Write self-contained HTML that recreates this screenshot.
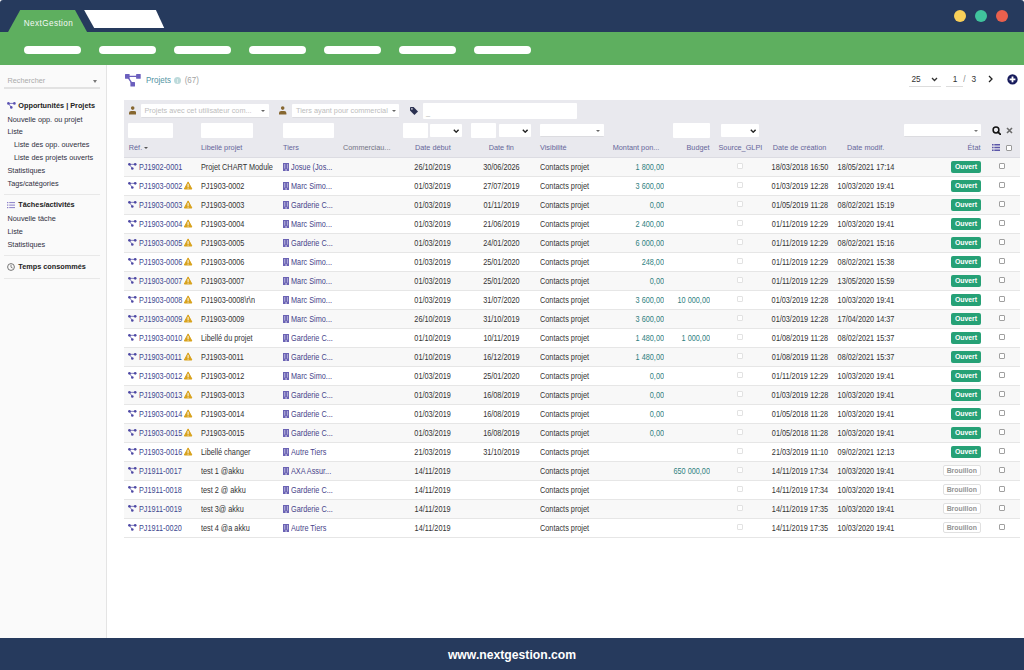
<!DOCTYPE html>
<html><head><meta charset="utf-8">
<style>
*{box-sizing:border-box;margin:0;padding:0}
html,body{width:1024px;height:670px;overflow:hidden;background:#fff}
body{position:relative;font-family:"Liberation Sans",sans-serif;font-size:7.3px;color:#333}
.abs{position:absolute}
#top{position:absolute;left:0;top:0;width:1024px;height:33px;background:#263a5d;border-radius:3px 3px 0 0}
#green{position:absolute;left:0;top:32px;width:1024px;height:33px;background:#5eaf5f}
.pill{position:absolute;top:46px;width:57px;height:8px;border-radius:4px;background:#fff}
.dot{position:absolute;top:10px;width:12px;height:12px;border-radius:50%}
#footer{position:absolute;left:0;top:638px;width:1024px;height:32px;background:#263a5d;color:#fff;font-weight:bold;font-size:12.2px;text-align:center;line-height:32px;padding-top:1px}
#side{position:absolute;left:0;top:65px;width:107px;height:573px;background:#fafafa;border-right:1px solid #e4e4e4}
.si{position:absolute;left:7.5px;white-space:nowrap;line-height:10px;color:#2f2f3f}
.si.b{font-weight:bold;color:#222}
.sep{position:absolute;left:4px;width:96px;height:1px;background:#e8e8e8}
#filt{position:absolute;left:124px;top:100px;width:896px;height:58px;background:#e9e9ee;border-bottom:1px solid #dcdce2}
.inp{position:absolute;background:#fff;border-radius:1px}
.ph{position:absolute;color:#bdbdbd;white-space:nowrap;line-height:10px}
.hd{position:absolute;top:143.3px;line-height:10px;color:#66669a;white-space:nowrap}
.row{position:absolute;left:124px;width:896px;height:19px;border-bottom:1px solid #e6e6e6}
.c{position:absolute;top:0.9px;line-height:18px;white-space:nowrap;transform:scaleY(1.15)}
.ctr{text-align:center}
.rgt{text-align:right}
.ref{color:#3e4890}
.reft{position:absolute;left:10.9px;top:0}
.pi{position:absolute;left:4.1px;top:5.4px}
.wi{position:absolute;left:60.2px;top:4.2px}
.lib{color:#333}
.tiers{color:#47448a}
.bi{position:absolute;left:158.8px;top:4.9px}
.tt{position:absolute;left:8px;top:0}
.dt{color:#333}
.vis{color:#333}
.amt{color:#2f7f7f}
.cb1{position:absolute;top:5px;width:6px;height:6px;border:1px solid #e2e2e2;border-radius:1px;background:#fff}
.cb2{position:absolute;left:875.3px;top:4.6px;width:6.2px;height:6.2px;border:0.9px solid #a0a0a0;border-radius:1px;background:#fff}
.badge{position:absolute;top:3.2px;height:11.4px;line-height:12px;font-weight:bold;font-size:6.9px;text-align:center;border-radius:2px}
.ouv{left:827px;width:30px;background:#26a176;color:#fff}
.badge span{display:inline-block;transform:scaleY(1.15)}
.brl{left:819px;width:37.5px;top:2.8px;height:11.2px;background:#fff;color:#939393;border:1px solid #e0e0e0;line-height:9px}
</style></head><body>
<div id="top"></div>
<svg class="abs" style="left:0;top:0" width="180" height="33" viewBox="0 0 180 33">
<path d="M7.5 33 L20.2 10 L75 10 L87.6 33 Z" fill="#5eaf5f"/>
<path d="M84.1 10 L155.9 10 L164.2 28.1 L94.2 28.1 Z" fill="#fff"/>
</svg>
<div class="abs" style="left:23.8px;top:19px;font-size:8.2px;letter-spacing:0.4px;line-height:10px;color:#f4f8f4">NextGestion</div>
<div class="dot" style="left:954.2px;top:10.4px;background:#f8cf59"></div>
<div class="dot" style="left:974.8px;top:10.4px;background:#40c39d"></div>
<div class="dot" style="left:996.2px;top:10.4px;background:#e9604d"></div>
<div id="green"></div>
<div class="pill" style="left:23.5px"></div><div class="pill" style="left:98.5px"></div><div class="pill" style="left:173.5px"></div><div class="pill" style="left:248.5px"></div><div class="pill" style="left:323.5px"></div><div class="pill" style="left:398.5px"></div><div class="pill" style="left:473.5px"></div>

<div id="side">
 <div class="si" style="left:7.5px;top:10.6px;color:#aaa">Rechercher</div>
 <div class="abs" style="left:92.5px;top:15px;width:0;height:0;border-left:2.5px solid transparent;border-right:2.5px solid transparent;border-top:3px solid #777"></div>
 <div class="abs" style="left:4px;top:22px;width:96px;height:1.5px;background:#e2e2e2"></div>
 <svg class="abs" style="left:7px;top:37px" width="9" height="7" viewBox="0 0 9 7"><path d="M1.4 1.4 L7.4 1.4 M1.4 1.4 L4.3 5.4" stroke="#5a52b2" stroke-width="0.8" fill="none"/><circle cx="1.4" cy="1.4" r="1.3" fill="#5a52b2"/><circle cx="7.4" cy="1.4" r="1.3" fill="#5a52b2"/><circle cx="4.3" cy="5.4" r="1.3" fill="#5a52b2"/></svg>
 <div class="si b" style="left:18.3px;top:35.8px">Opportunités | Projets</div>
 <div class="si" style="top:49.8px">Nouvelle opp. ou projet</div>
 <div class="si" style="top:62.3px">Liste</div>
 <div class="si" style="left:14px;top:75.3px">Liste des opp. ouvertes</div>
 <div class="si" style="left:14px;top:87.8px">Liste des projets ouverts</div>
 <div class="si" style="top:101.3px">Statistiques</div>
 <div class="si" style="top:114.3px">Tags/catégories</div>
 <div class="sep" style="top:129px"></div>
 <svg class="abs" style="left:7px;top:137px" width="8" height="7" viewBox="0 0 8 7"><g fill="#8a7fc8"><rect x="0" y="0" width="1.3" height="1.2"/><rect x="2.2" y="0.1" width="5.8" height="1"/><rect x="0" y="2.5" width="1.3" height="1.2"/><rect x="2.2" y="2.6" width="5.8" height="1"/><rect x="0" y="5" width="1.3" height="1.2"/><rect x="2.2" y="5.1" width="5.8" height="1"/></g></svg>
 <div class="si b" style="left:18.3px;top:135.3px">Tâches/activités</div>
 <div class="si" style="top:149.3px">Nouvelle tâche</div>
 <div class="si" style="top:161.8px">Liste</div>
 <div class="si" style="top:174.8px">Statistiques</div>
 <div class="sep" style="top:190px"></div>
 <svg class="abs" style="left:7px;top:198px" width="8" height="8" viewBox="0 0 8 8"><circle cx="4" cy="4" r="3.4" fill="none" stroke="#666" stroke-width="0.9"/><path d="M4 1.8 V4.2 L5.6 5" stroke="#666" stroke-width="0.8" fill="none"/></svg>
 <div class="si b" style="left:18.3px;top:197.3px">Temps consommés</div>
 <div class="sep" style="top:213px"></div>
</div>

<!-- title -->
<svg class="abs" style="left:124.9px;top:74px" width="16" height="13" viewBox="0 0 16 13"><path d="M2.3 2.3 L13.4 2.3 M2.3 2.3 L7.7 10.3" stroke="#6b5fbe" stroke-width="1.3" fill="none"/><rect x="0" y="0" width="4.6" height="4.7" rx="0.5" fill="#6b5fbe"/><rect x="11.1" y="0" width="4.6" height="4.7" rx="0.5" fill="#6b5fbe"/><rect x="5.4" y="8" width="4.6" height="4.6" rx="0.5" fill="#6b5fbe"/></svg>
<div class="abs" style="left:146px;top:75.8px;font-size:8px;line-height:10px;color:#5193a3;transform:scaleY(1.12)">Projets</div>
<div class="abs" style="left:174.2px;top:77.4px;width:7px;height:7px;border-radius:50%;background:#bddadb"></div>
<div class="abs" style="left:177.3px;top:79px;width:0.9px;height:4px;background:#fff;opacity:.5"></div>
<div class="abs" style="left:184.7px;top:75.8px;font-size:8px;line-height:10px;color:#a2a2a2;transform:scaleY(1.12)">(67)</div>

<div class="abs" style="left:911.5px;top:73.6px;font-size:8.3px;line-height:10px;color:#333;transform:scaleY(1.12)">25</div>
<svg class="abs" style="left:931px;top:77px" width="7" height="5" viewBox="0 0 7 5"><path d="M1 1 L3.5 3.5 L6 1" stroke="#333" stroke-width="1.3" fill="none"/></svg>
<div class="abs" style="left:909px;top:86px;width:32px;height:1px;background:#ddd"></div>
<div class="abs" style="left:952.7px;top:73.6px;font-size:8.3px;line-height:10px;color:#333;transform:scaleY(1.12)">1</div>
<div class="abs" style="left:963.2px;top:73.6px;font-size:8.3px;line-height:10px;color:#8a8a8a;transform:scaleY(1.12)">/</div>
<div class="abs" style="left:971.4px;top:73.6px;font-size:8.3px;line-height:10px;color:#333;transform:scaleY(1.12)">3</div>
<div class="abs" style="left:945.5px;top:86px;width:17.5px;height:1px;background:#ddd"></div>
<svg class="abs" style="left:988px;top:74.5px" width="5" height="8" viewBox="0 0 5 8"><path d="M1 1 L4 4 L1 7" stroke="#222" stroke-width="1.3" fill="none"/></svg>
<svg class="abs" style="left:1006.8px;top:74px" width="11" height="11" viewBox="0 0 11 11"><circle cx="5.5" cy="5.4" r="5.15" fill="#171b5c"/><rect x="2.6" y="4.5" width="5.8" height="1.8" fill="#fff"/><rect x="4.6" y="2.5" width="1.8" height="5.8" fill="#fff"/></svg>

<!-- filters -->
<div id="filt"></div>
<svg class="abs" style="left:128.7px;top:105.6px" width="7.4" height="9" viewBox="0 0 7.4 9"><circle cx="3.7" cy="2.1" r="1.8" fill="#86662f"/><path d="M0 8.6 L0 7 Q0 5 2.2 5 L5.2 5 Q7.4 5 7.4 7 L7.4 8.6 Z" fill="#86662f"/></svg>
<div class="inp" style="left:141.2px;top:104px;width:128px;height:14px;border-bottom:1px solid #dcdce0"></div>
<div class="ph" style="left:144.5px;top:105.5px">Projets avec cet utilisateur com...</div>
<div class="abs" style="left:261px;top:110px;border-left:2.2px solid transparent;border-right:2.2px solid transparent;border-top:2.6px solid #666"></div>
<svg class="abs" style="left:279.3px;top:105.6px" width="7.4" height="9" viewBox="0 0 7.4 9"><circle cx="3.7" cy="2.1" r="1.8" fill="#86662f"/><path d="M0 8.6 L0 7 Q0 5 2.2 5 L5.2 5 Q7.4 5 7.4 7 L7.4 8.6 Z" fill="#86662f"/></svg>
<div class="inp" style="left:292px;top:104px;width:107px;height:14px;border-bottom:1px solid #dcdce0"></div>
<div class="ph" style="left:296px;top:105.5px">Tiers ayant pour commercial</div>
<div class="abs" style="left:391.5px;top:110px;border-left:2.2px solid transparent;border-right:2.2px solid transparent;border-top:2.6px solid #666"></div>
<svg class="abs" style="left:410.4px;top:107px" width="8" height="8" viewBox="0 0 8 8"><path d="M0 0.8 Q0 0 0.8 0 L3.6 0 L8 4.4 L4.4 8 L0 3.6 Z" fill="#2a3050"/><circle cx="1.9" cy="1.9" r="0.8" fill="#e9e9ee"/></svg>
<div class="inp" style="left:423px;top:103px;width:154px;height:16px"></div>
<div class="ph" style="left:426px;top:107.5px;color:#b5b5b5">_</div>

<div class="inp" style="left:128px;top:123px;width:44.5px;height:15px"></div>
<div class="inp" style="left:201px;top:123px;width:51.5px;height:15px"></div>
<div class="inp" style="left:282.5px;top:123px;width:51.5px;height:15px"></div>
<div class="inp" style="left:403px;top:123px;width:24.5px;height:15px"></div>
<div class="inp" style="left:430px;top:123.6px;width:32.3px;height:13.2px"></div>
<svg class="abs" style="left:453.2px;top:128.6px" width="6.4" height="4.4" viewBox="0 0 6.4 4.4"><path d="M0.8 0.8 L3.2 3.2 L5.6 0.8" stroke="#222" stroke-width="1.4" fill="none"/></svg>
<div class="inp" style="left:471px;top:123px;width:25px;height:15px"></div>
<div class="inp" style="left:498.5px;top:123.6px;width:32.5px;height:13.2px"></div>
<svg class="abs" style="left:521.8px;top:128.6px" width="6.4" height="4.4" viewBox="0 0 6.4 4.4"><path d="M0.8 0.8 L3.2 3.2 L5.6 0.8" stroke="#222" stroke-width="1.4" fill="none"/></svg>
<div class="inp" style="left:540px;top:124px;width:64px;height:13.2px;border-bottom:1px solid #dcdce0"></div>
<div class="abs" style="left:596.2px;top:129.8px;border-left:2.2px solid transparent;border-right:2.2px solid transparent;border-top:2.6px solid #666"></div>
<div class="inp" style="left:673px;top:123px;width:37px;height:15px"></div>
<div class="inp" style="left:720.8px;top:123.9px;width:38.2px;height:13px"></div>
<svg class="abs" style="left:749.8px;top:128.6px" width="6.4" height="4.4" viewBox="0 0 6.4 4.4"><path d="M0.8 0.8 L3.2 3.2 L5.6 0.8" stroke="#222" stroke-width="1.4" fill="none"/></svg>
<div class="inp" style="left:904px;top:124.2px;width:77px;height:13px;border-bottom:1px solid #dcdce0"></div>
<div class="abs" style="left:973.5px;top:130px;border-left:2px solid transparent;border-right:2px solid transparent;border-top:2.4px solid #777"></div>
<svg class="abs" style="left:991.5px;top:126px" width="9" height="9" viewBox="0 0 9 9"><circle cx="4" cy="4" r="2.9" fill="none" stroke="#111" stroke-width="1.5"/><path d="M6.1 6.1 L8.4 8.4" stroke="#111" stroke-width="1.8" stroke-linecap="round"/></svg>
<svg class="abs" style="left:1006.4px;top:127.2px" width="7" height="7" viewBox="0 0 7 7"><path d="M1 1 L6 6 M6 1 L1 6" stroke="#6a6a6a" stroke-width="1.6"/></svg>

<!-- header labels -->
<div class="hd" style="left:128.8px">Réf.</div>
<div class="abs" style="left:143.9px;top:147.4px;border-left:2px solid transparent;border-right:2px solid transparent;border-top:2.4px solid #555"></div>
<div class="hd" style="left:201px">Libellé projet</div>
<div class="hd" style="left:283px">Tiers</div>
<div class="hd" style="left:343px;color:#747484">Commerciau...</div>
<div class="hd" style="left:415px">Date début</div>
<div class="hd" style="left:488.7px">Date fin</div>
<div class="hd" style="left:540px">Visibilité</div>
<div class="hd" style="left:612.7px">Montant pon...</div>
<div class="hd" style="left:686.5px">Budget</div>
<div class="hd" style="left:718.5px">Source_GLPI</div>
<div class="hd" style="left:772.8px">Date de création</div>
<div class="hd" style="left:847px">Date modif.</div>
<div class="hd" style="left:967.5px">État</div>
<svg class="abs" style="left:992px;top:144px" width="8" height="7" viewBox="0 0 8 7"><g fill="#5b56a8"><rect x="0" y="0" width="1.6" height="1.5"/><rect x="2.3" y="0" width="5.7" height="1.5"/><rect x="0" y="2.75" width="1.6" height="1.5"/><rect x="2.3" y="2.75" width="5.7" height="1.5"/><rect x="0" y="5.5" width="1.6" height="1.5"/><rect x="2.3" y="5.5" width="5.7" height="1.5"/></g></svg>
<div class="abs" style="left:1006px;top:144.5px;width:6.3px;height:6.3px;border:1px solid #9a9a9a;background:#fff;border-radius:1px"></div>

<div class="row" style="top:158px;background:#f8f8f8">
<svg class="pi" width="9" height="7" viewBox="0 0 9 7"><path d="M1.4 1.35 L7.2 1.35 M1.4 1.35 L4.3 5.5" stroke="#4d48a4" stroke-width="0.7" fill="none"/><circle cx="1.4" cy="1.35" r="1.3" fill="#4d48a4"/><circle cx="7.2" cy="1.35" r="1.3" fill="#4d48a4"/><circle cx="4.3" cy="5.5" r="1.3" fill="#4d48a4"/></svg>
<span class="c ref" style="left:14.9px">PJ1902-0001</span>
<span class="c lib" style="left:77px">Projet CHART Module</span>
<svg class="bi" width="6.2" height="8" viewBox="0 0 6.2 8"><rect x="0" y="0" width="6.2" height="8" fill="#6a62b4"/><rect x="1.1" y="1" width="1.2" height="4.6" fill="#fff" opacity=".45"/><rect x="3.9" y="1" width="1.2" height="4.6" fill="#fff" opacity=".45"/><rect x="2.4" y="6" width="1.4" height="2" fill="#fff" opacity=".5"/></svg>
<span class="c tiers" style="left:167px">Josue (Jos...</span>
<span class="c dt ctr" style="left:284.6px;width:48px">26/10/2019</span>
<span class="c dt ctr" style="left:353.4px;width:48px">30/06/2026</span>
<span class="c vis" style="left:416px">Contacts projet</span>
<span class="c amt rgt" style="right:356px">1 800,00</span>
<span class="cb1" style="left:613px"></span>
<span class="c dt ctr" style="left:646px;width:60px">18/03/2018 16:50</span>
<span class="c dt ctr" style="left:712px;width:60px">18/05/2021 17:14</span>
<span class="badge ouv"><span>Ouvert</span></span>
<span class="cb2"></span>
</div>
<div class="row" style="top:177px;background:#ffffff">
<svg class="pi" width="9" height="7" viewBox="0 0 9 7"><path d="M1.4 1.35 L7.2 1.35 M1.4 1.35 L4.3 5.5" stroke="#4d48a4" stroke-width="0.7" fill="none"/><circle cx="1.4" cy="1.35" r="1.3" fill="#4d48a4"/><circle cx="7.2" cy="1.35" r="1.3" fill="#4d48a4"/><circle cx="4.3" cy="5.5" r="1.3" fill="#4d48a4"/></svg>
<span class="c ref" style="left:14.9px">PJ1903-0002</span>
<svg class="wi" width="9" height="9" viewBox="0 0 9 9"><path d="M4.1 0.9 L7.9 8 L0.3 8 Z" fill="#d8a21d" stroke="#d8a21d" stroke-width="1" stroke-linejoin="round"/><rect x="3.5" y="3" width="1.2" height="3" fill="#fff" opacity=".8"/><rect x="3.5" y="6.6" width="1.2" height="1" fill="#fff" opacity=".8"/></svg>
<span class="c lib" style="left:77px">PJ1903-0002</span>
<svg class="bi" width="6.2" height="8" viewBox="0 0 6.2 8"><rect x="0" y="0" width="6.2" height="8" fill="#6a62b4"/><rect x="1.1" y="1" width="1.2" height="4.6" fill="#fff" opacity=".45"/><rect x="3.9" y="1" width="1.2" height="4.6" fill="#fff" opacity=".45"/><rect x="2.4" y="6" width="1.4" height="2" fill="#fff" opacity=".5"/></svg>
<span class="c tiers" style="left:167px">Marc Simo...</span>
<span class="c dt ctr" style="left:284.6px;width:48px">01/03/2019</span>
<span class="c dt ctr" style="left:353.4px;width:48px">27/07/2019</span>
<span class="c vis" style="left:416px">Contacts projet</span>
<span class="c amt rgt" style="right:356px">3 600,00</span>
<span class="cb1" style="left:613px"></span>
<span class="c dt ctr" style="left:646px;width:60px">01/03/2019 12:28</span>
<span class="c dt ctr" style="left:712px;width:60px">10/03/2020 19:41</span>
<span class="badge ouv"><span>Ouvert</span></span>
<span class="cb2"></span>
</div>
<div class="row" style="top:196px;background:#f8f8f8">
<svg class="pi" width="9" height="7" viewBox="0 0 9 7"><path d="M1.4 1.35 L7.2 1.35 M1.4 1.35 L4.3 5.5" stroke="#4d48a4" stroke-width="0.7" fill="none"/><circle cx="1.4" cy="1.35" r="1.3" fill="#4d48a4"/><circle cx="7.2" cy="1.35" r="1.3" fill="#4d48a4"/><circle cx="4.3" cy="5.5" r="1.3" fill="#4d48a4"/></svg>
<span class="c ref" style="left:14.9px">PJ1903-0003</span>
<svg class="wi" width="9" height="9" viewBox="0 0 9 9"><path d="M4.1 0.9 L7.9 8 L0.3 8 Z" fill="#d8a21d" stroke="#d8a21d" stroke-width="1" stroke-linejoin="round"/><rect x="3.5" y="3" width="1.2" height="3" fill="#fff" opacity=".8"/><rect x="3.5" y="6.6" width="1.2" height="1" fill="#fff" opacity=".8"/></svg>
<span class="c lib" style="left:77px">PJ1903-0003</span>
<svg class="bi" width="6.2" height="8" viewBox="0 0 6.2 8"><rect x="0" y="0" width="6.2" height="8" fill="#6a62b4"/><rect x="1.1" y="1" width="1.2" height="4.6" fill="#fff" opacity=".45"/><rect x="3.9" y="1" width="1.2" height="4.6" fill="#fff" opacity=".45"/><rect x="2.4" y="6" width="1.4" height="2" fill="#fff" opacity=".5"/></svg>
<span class="c tiers" style="left:167px">Garderie C...</span>
<span class="c dt ctr" style="left:284.6px;width:48px">01/03/2019</span>
<span class="c dt ctr" style="left:353.4px;width:48px">01/11/2019</span>
<span class="c vis" style="left:416px">Contacts projet</span>
<span class="c amt rgt" style="right:356px">0,00</span>
<span class="cb1" style="left:613px"></span>
<span class="c dt ctr" style="left:646px;width:60px">01/05/2019 11:28</span>
<span class="c dt ctr" style="left:712px;width:60px">08/02/2021 15:19</span>
<span class="badge ouv"><span>Ouvert</span></span>
<span class="cb2"></span>
</div>
<div class="row" style="top:215px;background:#ffffff">
<svg class="pi" width="9" height="7" viewBox="0 0 9 7"><path d="M1.4 1.35 L7.2 1.35 M1.4 1.35 L4.3 5.5" stroke="#4d48a4" stroke-width="0.7" fill="none"/><circle cx="1.4" cy="1.35" r="1.3" fill="#4d48a4"/><circle cx="7.2" cy="1.35" r="1.3" fill="#4d48a4"/><circle cx="4.3" cy="5.5" r="1.3" fill="#4d48a4"/></svg>
<span class="c ref" style="left:14.9px">PJ1903-0004</span>
<svg class="wi" width="9" height="9" viewBox="0 0 9 9"><path d="M4.1 0.9 L7.9 8 L0.3 8 Z" fill="#d8a21d" stroke="#d8a21d" stroke-width="1" stroke-linejoin="round"/><rect x="3.5" y="3" width="1.2" height="3" fill="#fff" opacity=".8"/><rect x="3.5" y="6.6" width="1.2" height="1" fill="#fff" opacity=".8"/></svg>
<span class="c lib" style="left:77px">PJ1903-0004</span>
<svg class="bi" width="6.2" height="8" viewBox="0 0 6.2 8"><rect x="0" y="0" width="6.2" height="8" fill="#6a62b4"/><rect x="1.1" y="1" width="1.2" height="4.6" fill="#fff" opacity=".45"/><rect x="3.9" y="1" width="1.2" height="4.6" fill="#fff" opacity=".45"/><rect x="2.4" y="6" width="1.4" height="2" fill="#fff" opacity=".5"/></svg>
<span class="c tiers" style="left:167px">Marc Simo...</span>
<span class="c dt ctr" style="left:284.6px;width:48px">01/03/2019</span>
<span class="c dt ctr" style="left:353.4px;width:48px">21/06/2019</span>
<span class="c vis" style="left:416px">Contacts projet</span>
<span class="c amt rgt" style="right:356px">2 400,00</span>
<span class="cb1" style="left:613px"></span>
<span class="c dt ctr" style="left:646px;width:60px">01/11/2019 12:29</span>
<span class="c dt ctr" style="left:712px;width:60px">10/03/2020 19:41</span>
<span class="badge ouv"><span>Ouvert</span></span>
<span class="cb2"></span>
</div>
<div class="row" style="top:234px;background:#f8f8f8">
<svg class="pi" width="9" height="7" viewBox="0 0 9 7"><path d="M1.4 1.35 L7.2 1.35 M1.4 1.35 L4.3 5.5" stroke="#4d48a4" stroke-width="0.7" fill="none"/><circle cx="1.4" cy="1.35" r="1.3" fill="#4d48a4"/><circle cx="7.2" cy="1.35" r="1.3" fill="#4d48a4"/><circle cx="4.3" cy="5.5" r="1.3" fill="#4d48a4"/></svg>
<span class="c ref" style="left:14.9px">PJ1903-0005</span>
<svg class="wi" width="9" height="9" viewBox="0 0 9 9"><path d="M4.1 0.9 L7.9 8 L0.3 8 Z" fill="#d8a21d" stroke="#d8a21d" stroke-width="1" stroke-linejoin="round"/><rect x="3.5" y="3" width="1.2" height="3" fill="#fff" opacity=".8"/><rect x="3.5" y="6.6" width="1.2" height="1" fill="#fff" opacity=".8"/></svg>
<span class="c lib" style="left:77px">PJ1903-0005</span>
<svg class="bi" width="6.2" height="8" viewBox="0 0 6.2 8"><rect x="0" y="0" width="6.2" height="8" fill="#6a62b4"/><rect x="1.1" y="1" width="1.2" height="4.6" fill="#fff" opacity=".45"/><rect x="3.9" y="1" width="1.2" height="4.6" fill="#fff" opacity=".45"/><rect x="2.4" y="6" width="1.4" height="2" fill="#fff" opacity=".5"/></svg>
<span class="c tiers" style="left:167px">Garderie C...</span>
<span class="c dt ctr" style="left:284.6px;width:48px">01/03/2019</span>
<span class="c dt ctr" style="left:353.4px;width:48px">24/01/2020</span>
<span class="c vis" style="left:416px">Contacts projet</span>
<span class="c amt rgt" style="right:356px">6 000,00</span>
<span class="cb1" style="left:613px"></span>
<span class="c dt ctr" style="left:646px;width:60px">01/11/2019 12:29</span>
<span class="c dt ctr" style="left:712px;width:60px">08/02/2021 15:16</span>
<span class="badge ouv"><span>Ouvert</span></span>
<span class="cb2"></span>
</div>
<div class="row" style="top:253px;background:#ffffff">
<svg class="pi" width="9" height="7" viewBox="0 0 9 7"><path d="M1.4 1.35 L7.2 1.35 M1.4 1.35 L4.3 5.5" stroke="#4d48a4" stroke-width="0.7" fill="none"/><circle cx="1.4" cy="1.35" r="1.3" fill="#4d48a4"/><circle cx="7.2" cy="1.35" r="1.3" fill="#4d48a4"/><circle cx="4.3" cy="5.5" r="1.3" fill="#4d48a4"/></svg>
<span class="c ref" style="left:14.9px">PJ1903-0006</span>
<svg class="wi" width="9" height="9" viewBox="0 0 9 9"><path d="M4.1 0.9 L7.9 8 L0.3 8 Z" fill="#d8a21d" stroke="#d8a21d" stroke-width="1" stroke-linejoin="round"/><rect x="3.5" y="3" width="1.2" height="3" fill="#fff" opacity=".8"/><rect x="3.5" y="6.6" width="1.2" height="1" fill="#fff" opacity=".8"/></svg>
<span class="c lib" style="left:77px">PJ1903-0006</span>
<svg class="bi" width="6.2" height="8" viewBox="0 0 6.2 8"><rect x="0" y="0" width="6.2" height="8" fill="#6a62b4"/><rect x="1.1" y="1" width="1.2" height="4.6" fill="#fff" opacity=".45"/><rect x="3.9" y="1" width="1.2" height="4.6" fill="#fff" opacity=".45"/><rect x="2.4" y="6" width="1.4" height="2" fill="#fff" opacity=".5"/></svg>
<span class="c tiers" style="left:167px">Marc Simo...</span>
<span class="c dt ctr" style="left:284.6px;width:48px">01/03/2019</span>
<span class="c dt ctr" style="left:353.4px;width:48px">25/01/2020</span>
<span class="c vis" style="left:416px">Contacts projet</span>
<span class="c amt rgt" style="right:356px">248,00</span>
<span class="cb1" style="left:613px"></span>
<span class="c dt ctr" style="left:646px;width:60px">01/11/2019 12:29</span>
<span class="c dt ctr" style="left:712px;width:60px">08/02/2021 15:38</span>
<span class="badge ouv"><span>Ouvert</span></span>
<span class="cb2"></span>
</div>
<div class="row" style="top:272px;background:#f8f8f8">
<svg class="pi" width="9" height="7" viewBox="0 0 9 7"><path d="M1.4 1.35 L7.2 1.35 M1.4 1.35 L4.3 5.5" stroke="#4d48a4" stroke-width="0.7" fill="none"/><circle cx="1.4" cy="1.35" r="1.3" fill="#4d48a4"/><circle cx="7.2" cy="1.35" r="1.3" fill="#4d48a4"/><circle cx="4.3" cy="5.5" r="1.3" fill="#4d48a4"/></svg>
<span class="c ref" style="left:14.9px">PJ1903-0007</span>
<svg class="wi" width="9" height="9" viewBox="0 0 9 9"><path d="M4.1 0.9 L7.9 8 L0.3 8 Z" fill="#d8a21d" stroke="#d8a21d" stroke-width="1" stroke-linejoin="round"/><rect x="3.5" y="3" width="1.2" height="3" fill="#fff" opacity=".8"/><rect x="3.5" y="6.6" width="1.2" height="1" fill="#fff" opacity=".8"/></svg>
<span class="c lib" style="left:77px">PJ1903-0007</span>
<svg class="bi" width="6.2" height="8" viewBox="0 0 6.2 8"><rect x="0" y="0" width="6.2" height="8" fill="#6a62b4"/><rect x="1.1" y="1" width="1.2" height="4.6" fill="#fff" opacity=".45"/><rect x="3.9" y="1" width="1.2" height="4.6" fill="#fff" opacity=".45"/><rect x="2.4" y="6" width="1.4" height="2" fill="#fff" opacity=".5"/></svg>
<span class="c tiers" style="left:167px">Marc Simo...</span>
<span class="c dt ctr" style="left:284.6px;width:48px">01/03/2019</span>
<span class="c dt ctr" style="left:353.4px;width:48px">25/01/2020</span>
<span class="c vis" style="left:416px">Contacts projet</span>
<span class="c amt rgt" style="right:356px">0,00</span>
<span class="cb1" style="left:613px"></span>
<span class="c dt ctr" style="left:646px;width:60px">01/11/2019 12:29</span>
<span class="c dt ctr" style="left:712px;width:60px">13/05/2020 15:59</span>
<span class="badge ouv"><span>Ouvert</span></span>
<span class="cb2"></span>
</div>
<div class="row" style="top:291px;background:#ffffff">
<svg class="pi" width="9" height="7" viewBox="0 0 9 7"><path d="M1.4 1.35 L7.2 1.35 M1.4 1.35 L4.3 5.5" stroke="#4d48a4" stroke-width="0.7" fill="none"/><circle cx="1.4" cy="1.35" r="1.3" fill="#4d48a4"/><circle cx="7.2" cy="1.35" r="1.3" fill="#4d48a4"/><circle cx="4.3" cy="5.5" r="1.3" fill="#4d48a4"/></svg>
<span class="c ref" style="left:14.9px">PJ1903-0008</span>
<svg class="wi" width="9" height="9" viewBox="0 0 9 9"><path d="M4.1 0.9 L7.9 8 L0.3 8 Z" fill="#d8a21d" stroke="#d8a21d" stroke-width="1" stroke-linejoin="round"/><rect x="3.5" y="3" width="1.2" height="3" fill="#fff" opacity=".8"/><rect x="3.5" y="6.6" width="1.2" height="1" fill="#fff" opacity=".8"/></svg>
<span class="c lib" style="left:77px">PJ1903-0008\r\n</span>
<svg class="bi" width="6.2" height="8" viewBox="0 0 6.2 8"><rect x="0" y="0" width="6.2" height="8" fill="#6a62b4"/><rect x="1.1" y="1" width="1.2" height="4.6" fill="#fff" opacity=".45"/><rect x="3.9" y="1" width="1.2" height="4.6" fill="#fff" opacity=".45"/><rect x="2.4" y="6" width="1.4" height="2" fill="#fff" opacity=".5"/></svg>
<span class="c tiers" style="left:167px">Marc Simo...</span>
<span class="c dt ctr" style="left:284.6px;width:48px">01/03/2019</span>
<span class="c dt ctr" style="left:353.4px;width:48px">31/07/2020</span>
<span class="c vis" style="left:416px">Contacts projet</span>
<span class="c amt rgt" style="right:356px">3 600,00</span>
<span class="c amt rgt" style="right:310px">10 000,00</span>
<span class="cb1" style="left:613px"></span>
<span class="c dt ctr" style="left:646px;width:60px">01/03/2019 12:28</span>
<span class="c dt ctr" style="left:712px;width:60px">10/03/2020 19:41</span>
<span class="badge ouv"><span>Ouvert</span></span>
<span class="cb2"></span>
</div>
<div class="row" style="top:310px;background:#f8f8f8">
<svg class="pi" width="9" height="7" viewBox="0 0 9 7"><path d="M1.4 1.35 L7.2 1.35 M1.4 1.35 L4.3 5.5" stroke="#4d48a4" stroke-width="0.7" fill="none"/><circle cx="1.4" cy="1.35" r="1.3" fill="#4d48a4"/><circle cx="7.2" cy="1.35" r="1.3" fill="#4d48a4"/><circle cx="4.3" cy="5.5" r="1.3" fill="#4d48a4"/></svg>
<span class="c ref" style="left:14.9px">PJ1903-0009</span>
<svg class="wi" width="9" height="9" viewBox="0 0 9 9"><path d="M4.1 0.9 L7.9 8 L0.3 8 Z" fill="#d8a21d" stroke="#d8a21d" stroke-width="1" stroke-linejoin="round"/><rect x="3.5" y="3" width="1.2" height="3" fill="#fff" opacity=".8"/><rect x="3.5" y="6.6" width="1.2" height="1" fill="#fff" opacity=".8"/></svg>
<span class="c lib" style="left:77px">PJ1903-0009</span>
<svg class="bi" width="6.2" height="8" viewBox="0 0 6.2 8"><rect x="0" y="0" width="6.2" height="8" fill="#6a62b4"/><rect x="1.1" y="1" width="1.2" height="4.6" fill="#fff" opacity=".45"/><rect x="3.9" y="1" width="1.2" height="4.6" fill="#fff" opacity=".45"/><rect x="2.4" y="6" width="1.4" height="2" fill="#fff" opacity=".5"/></svg>
<span class="c tiers" style="left:167px">Marc Simo...</span>
<span class="c dt ctr" style="left:284.6px;width:48px">26/10/2019</span>
<span class="c dt ctr" style="left:353.4px;width:48px">31/10/2019</span>
<span class="c vis" style="left:416px">Contacts projet</span>
<span class="c amt rgt" style="right:356px">3 600,00</span>
<span class="cb1" style="left:613px"></span>
<span class="c dt ctr" style="left:646px;width:60px">01/03/2019 12:28</span>
<span class="c dt ctr" style="left:712px;width:60px">17/04/2020 14:37</span>
<span class="badge ouv"><span>Ouvert</span></span>
<span class="cb2"></span>
</div>
<div class="row" style="top:329px;background:#ffffff">
<svg class="pi" width="9" height="7" viewBox="0 0 9 7"><path d="M1.4 1.35 L7.2 1.35 M1.4 1.35 L4.3 5.5" stroke="#4d48a4" stroke-width="0.7" fill="none"/><circle cx="1.4" cy="1.35" r="1.3" fill="#4d48a4"/><circle cx="7.2" cy="1.35" r="1.3" fill="#4d48a4"/><circle cx="4.3" cy="5.5" r="1.3" fill="#4d48a4"/></svg>
<span class="c ref" style="left:14.9px">PJ1903-0010</span>
<svg class="wi" width="9" height="9" viewBox="0 0 9 9"><path d="M4.1 0.9 L7.9 8 L0.3 8 Z" fill="#d8a21d" stroke="#d8a21d" stroke-width="1" stroke-linejoin="round"/><rect x="3.5" y="3" width="1.2" height="3" fill="#fff" opacity=".8"/><rect x="3.5" y="6.6" width="1.2" height="1" fill="#fff" opacity=".8"/></svg>
<span class="c lib" style="left:77px">Libellé du projet</span>
<svg class="bi" width="6.2" height="8" viewBox="0 0 6.2 8"><rect x="0" y="0" width="6.2" height="8" fill="#6a62b4"/><rect x="1.1" y="1" width="1.2" height="4.6" fill="#fff" opacity=".45"/><rect x="3.9" y="1" width="1.2" height="4.6" fill="#fff" opacity=".45"/><rect x="2.4" y="6" width="1.4" height="2" fill="#fff" opacity=".5"/></svg>
<span class="c tiers" style="left:167px">Garderie C...</span>
<span class="c dt ctr" style="left:284.6px;width:48px">01/10/2019</span>
<span class="c dt ctr" style="left:353.4px;width:48px">10/11/2019</span>
<span class="c vis" style="left:416px">Contacts projet</span>
<span class="c amt rgt" style="right:356px">1 480,00</span>
<span class="c amt rgt" style="right:310px">1 000,00</span>
<span class="cb1" style="left:613px"></span>
<span class="c dt ctr" style="left:646px;width:60px">01/08/2019 11:28</span>
<span class="c dt ctr" style="left:712px;width:60px">08/02/2021 15:37</span>
<span class="badge ouv"><span>Ouvert</span></span>
<span class="cb2"></span>
</div>
<div class="row" style="top:348px;background:#f8f8f8">
<svg class="pi" width="9" height="7" viewBox="0 0 9 7"><path d="M1.4 1.35 L7.2 1.35 M1.4 1.35 L4.3 5.5" stroke="#4d48a4" stroke-width="0.7" fill="none"/><circle cx="1.4" cy="1.35" r="1.3" fill="#4d48a4"/><circle cx="7.2" cy="1.35" r="1.3" fill="#4d48a4"/><circle cx="4.3" cy="5.5" r="1.3" fill="#4d48a4"/></svg>
<span class="c ref" style="left:14.9px">PJ1903-0011</span>
<svg class="wi" width="9" height="9" viewBox="0 0 9 9"><path d="M4.1 0.9 L7.9 8 L0.3 8 Z" fill="#d8a21d" stroke="#d8a21d" stroke-width="1" stroke-linejoin="round"/><rect x="3.5" y="3" width="1.2" height="3" fill="#fff" opacity=".8"/><rect x="3.5" y="6.6" width="1.2" height="1" fill="#fff" opacity=".8"/></svg>
<span class="c lib" style="left:77px">PJ1903-0011</span>
<svg class="bi" width="6.2" height="8" viewBox="0 0 6.2 8"><rect x="0" y="0" width="6.2" height="8" fill="#6a62b4"/><rect x="1.1" y="1" width="1.2" height="4.6" fill="#fff" opacity=".45"/><rect x="3.9" y="1" width="1.2" height="4.6" fill="#fff" opacity=".45"/><rect x="2.4" y="6" width="1.4" height="2" fill="#fff" opacity=".5"/></svg>
<span class="c tiers" style="left:167px">Garderie C...</span>
<span class="c dt ctr" style="left:284.6px;width:48px">01/10/2019</span>
<span class="c dt ctr" style="left:353.4px;width:48px">16/12/2019</span>
<span class="c vis" style="left:416px">Contacts projet</span>
<span class="c amt rgt" style="right:356px">1 480,00</span>
<span class="cb1" style="left:613px"></span>
<span class="c dt ctr" style="left:646px;width:60px">01/08/2019 11:28</span>
<span class="c dt ctr" style="left:712px;width:60px">08/02/2021 15:37</span>
<span class="badge ouv"><span>Ouvert</span></span>
<span class="cb2"></span>
</div>
<div class="row" style="top:367px;background:#ffffff">
<svg class="pi" width="9" height="7" viewBox="0 0 9 7"><path d="M1.4 1.35 L7.2 1.35 M1.4 1.35 L4.3 5.5" stroke="#4d48a4" stroke-width="0.7" fill="none"/><circle cx="1.4" cy="1.35" r="1.3" fill="#4d48a4"/><circle cx="7.2" cy="1.35" r="1.3" fill="#4d48a4"/><circle cx="4.3" cy="5.5" r="1.3" fill="#4d48a4"/></svg>
<span class="c ref" style="left:14.9px">PJ1903-0012</span>
<svg class="wi" width="9" height="9" viewBox="0 0 9 9"><path d="M4.1 0.9 L7.9 8 L0.3 8 Z" fill="#d8a21d" stroke="#d8a21d" stroke-width="1" stroke-linejoin="round"/><rect x="3.5" y="3" width="1.2" height="3" fill="#fff" opacity=".8"/><rect x="3.5" y="6.6" width="1.2" height="1" fill="#fff" opacity=".8"/></svg>
<span class="c lib" style="left:77px">PJ1903-0012</span>
<svg class="bi" width="6.2" height="8" viewBox="0 0 6.2 8"><rect x="0" y="0" width="6.2" height="8" fill="#6a62b4"/><rect x="1.1" y="1" width="1.2" height="4.6" fill="#fff" opacity=".45"/><rect x="3.9" y="1" width="1.2" height="4.6" fill="#fff" opacity=".45"/><rect x="2.4" y="6" width="1.4" height="2" fill="#fff" opacity=".5"/></svg>
<span class="c tiers" style="left:167px">Marc Simo...</span>
<span class="c dt ctr" style="left:284.6px;width:48px">01/03/2019</span>
<span class="c dt ctr" style="left:353.4px;width:48px">25/01/2020</span>
<span class="c vis" style="left:416px">Contacts projet</span>
<span class="c amt rgt" style="right:356px">0,00</span>
<span class="cb1" style="left:613px"></span>
<span class="c dt ctr" style="left:646px;width:60px">01/11/2019 12:29</span>
<span class="c dt ctr" style="left:712px;width:60px">10/03/2020 19:41</span>
<span class="badge ouv"><span>Ouvert</span></span>
<span class="cb2"></span>
</div>
<div class="row" style="top:386px;background:#f8f8f8">
<svg class="pi" width="9" height="7" viewBox="0 0 9 7"><path d="M1.4 1.35 L7.2 1.35 M1.4 1.35 L4.3 5.5" stroke="#4d48a4" stroke-width="0.7" fill="none"/><circle cx="1.4" cy="1.35" r="1.3" fill="#4d48a4"/><circle cx="7.2" cy="1.35" r="1.3" fill="#4d48a4"/><circle cx="4.3" cy="5.5" r="1.3" fill="#4d48a4"/></svg>
<span class="c ref" style="left:14.9px">PJ1903-0013</span>
<svg class="wi" width="9" height="9" viewBox="0 0 9 9"><path d="M4.1 0.9 L7.9 8 L0.3 8 Z" fill="#d8a21d" stroke="#d8a21d" stroke-width="1" stroke-linejoin="round"/><rect x="3.5" y="3" width="1.2" height="3" fill="#fff" opacity=".8"/><rect x="3.5" y="6.6" width="1.2" height="1" fill="#fff" opacity=".8"/></svg>
<span class="c lib" style="left:77px">PJ1903-0013</span>
<svg class="bi" width="6.2" height="8" viewBox="0 0 6.2 8"><rect x="0" y="0" width="6.2" height="8" fill="#6a62b4"/><rect x="1.1" y="1" width="1.2" height="4.6" fill="#fff" opacity=".45"/><rect x="3.9" y="1" width="1.2" height="4.6" fill="#fff" opacity=".45"/><rect x="2.4" y="6" width="1.4" height="2" fill="#fff" opacity=".5"/></svg>
<span class="c tiers" style="left:167px">Garderie C...</span>
<span class="c dt ctr" style="left:284.6px;width:48px">01/03/2019</span>
<span class="c dt ctr" style="left:353.4px;width:48px">16/08/2019</span>
<span class="c vis" style="left:416px">Contacts projet</span>
<span class="c amt rgt" style="right:356px">0,00</span>
<span class="cb1" style="left:613px"></span>
<span class="c dt ctr" style="left:646px;width:60px">01/03/2019 12:28</span>
<span class="c dt ctr" style="left:712px;width:60px">10/03/2020 19:41</span>
<span class="badge ouv"><span>Ouvert</span></span>
<span class="cb2"></span>
</div>
<div class="row" style="top:405px;background:#ffffff">
<svg class="pi" width="9" height="7" viewBox="0 0 9 7"><path d="M1.4 1.35 L7.2 1.35 M1.4 1.35 L4.3 5.5" stroke="#4d48a4" stroke-width="0.7" fill="none"/><circle cx="1.4" cy="1.35" r="1.3" fill="#4d48a4"/><circle cx="7.2" cy="1.35" r="1.3" fill="#4d48a4"/><circle cx="4.3" cy="5.5" r="1.3" fill="#4d48a4"/></svg>
<span class="c ref" style="left:14.9px">PJ1903-0014</span>
<svg class="wi" width="9" height="9" viewBox="0 0 9 9"><path d="M4.1 0.9 L7.9 8 L0.3 8 Z" fill="#d8a21d" stroke="#d8a21d" stroke-width="1" stroke-linejoin="round"/><rect x="3.5" y="3" width="1.2" height="3" fill="#fff" opacity=".8"/><rect x="3.5" y="6.6" width="1.2" height="1" fill="#fff" opacity=".8"/></svg>
<span class="c lib" style="left:77px">PJ1903-0014</span>
<svg class="bi" width="6.2" height="8" viewBox="0 0 6.2 8"><rect x="0" y="0" width="6.2" height="8" fill="#6a62b4"/><rect x="1.1" y="1" width="1.2" height="4.6" fill="#fff" opacity=".45"/><rect x="3.9" y="1" width="1.2" height="4.6" fill="#fff" opacity=".45"/><rect x="2.4" y="6" width="1.4" height="2" fill="#fff" opacity=".5"/></svg>
<span class="c tiers" style="left:167px">Garderie C...</span>
<span class="c dt ctr" style="left:284.6px;width:48px">01/03/2019</span>
<span class="c dt ctr" style="left:353.4px;width:48px">16/08/2019</span>
<span class="c vis" style="left:416px">Contacts projet</span>
<span class="c amt rgt" style="right:356px">0,00</span>
<span class="cb1" style="left:613px"></span>
<span class="c dt ctr" style="left:646px;width:60px">01/05/2018 11:28</span>
<span class="c dt ctr" style="left:712px;width:60px">10/03/2020 19:41</span>
<span class="badge ouv"><span>Ouvert</span></span>
<span class="cb2"></span>
</div>
<div class="row" style="top:424px;background:#f8f8f8">
<svg class="pi" width="9" height="7" viewBox="0 0 9 7"><path d="M1.4 1.35 L7.2 1.35 M1.4 1.35 L4.3 5.5" stroke="#4d48a4" stroke-width="0.7" fill="none"/><circle cx="1.4" cy="1.35" r="1.3" fill="#4d48a4"/><circle cx="7.2" cy="1.35" r="1.3" fill="#4d48a4"/><circle cx="4.3" cy="5.5" r="1.3" fill="#4d48a4"/></svg>
<span class="c ref" style="left:14.9px">PJ1903-0015</span>
<svg class="wi" width="9" height="9" viewBox="0 0 9 9"><path d="M4.1 0.9 L7.9 8 L0.3 8 Z" fill="#d8a21d" stroke="#d8a21d" stroke-width="1" stroke-linejoin="round"/><rect x="3.5" y="3" width="1.2" height="3" fill="#fff" opacity=".8"/><rect x="3.5" y="6.6" width="1.2" height="1" fill="#fff" opacity=".8"/></svg>
<span class="c lib" style="left:77px">PJ1903-0015</span>
<svg class="bi" width="6.2" height="8" viewBox="0 0 6.2 8"><rect x="0" y="0" width="6.2" height="8" fill="#6a62b4"/><rect x="1.1" y="1" width="1.2" height="4.6" fill="#fff" opacity=".45"/><rect x="3.9" y="1" width="1.2" height="4.6" fill="#fff" opacity=".45"/><rect x="2.4" y="6" width="1.4" height="2" fill="#fff" opacity=".5"/></svg>
<span class="c tiers" style="left:167px">Garderie C...</span>
<span class="c dt ctr" style="left:284.6px;width:48px">01/03/2019</span>
<span class="c dt ctr" style="left:353.4px;width:48px">16/08/2019</span>
<span class="c vis" style="left:416px">Contacts projet</span>
<span class="c amt rgt" style="right:356px">0,00</span>
<span class="cb1" style="left:613px"></span>
<span class="c dt ctr" style="left:646px;width:60px">01/05/2018 11:28</span>
<span class="c dt ctr" style="left:712px;width:60px">10/03/2020 19:41</span>
<span class="badge ouv"><span>Ouvert</span></span>
<span class="cb2"></span>
</div>
<div class="row" style="top:443px;background:#ffffff">
<svg class="pi" width="9" height="7" viewBox="0 0 9 7"><path d="M1.4 1.35 L7.2 1.35 M1.4 1.35 L4.3 5.5" stroke="#4d48a4" stroke-width="0.7" fill="none"/><circle cx="1.4" cy="1.35" r="1.3" fill="#4d48a4"/><circle cx="7.2" cy="1.35" r="1.3" fill="#4d48a4"/><circle cx="4.3" cy="5.5" r="1.3" fill="#4d48a4"/></svg>
<span class="c ref" style="left:14.9px">PJ1903-0016</span>
<svg class="wi" width="9" height="9" viewBox="0 0 9 9"><path d="M4.1 0.9 L7.9 8 L0.3 8 Z" fill="#d8a21d" stroke="#d8a21d" stroke-width="1" stroke-linejoin="round"/><rect x="3.5" y="3" width="1.2" height="3" fill="#fff" opacity=".8"/><rect x="3.5" y="6.6" width="1.2" height="1" fill="#fff" opacity=".8"/></svg>
<span class="c lib" style="left:77px">Libellé changer</span>
<svg class="bi" width="6.2" height="8" viewBox="0 0 6.2 8"><rect x="0" y="0" width="6.2" height="8" fill="#6a62b4"/><rect x="1.1" y="1" width="1.2" height="4.6" fill="#fff" opacity=".45"/><rect x="3.9" y="1" width="1.2" height="4.6" fill="#fff" opacity=".45"/><rect x="2.4" y="6" width="1.4" height="2" fill="#fff" opacity=".5"/></svg>
<span class="c tiers" style="left:167px">Autre Tiers</span>
<span class="c dt ctr" style="left:284.6px;width:48px">21/03/2019</span>
<span class="c dt ctr" style="left:353.4px;width:48px">31/10/2019</span>
<span class="c vis" style="left:416px">Contacts projet</span>
<span class="cb1" style="left:613px"></span>
<span class="c dt ctr" style="left:646px;width:60px">21/03/2019 11:10</span>
<span class="c dt ctr" style="left:712px;width:60px">09/02/2021 12:13</span>
<span class="badge ouv"><span>Ouvert</span></span>
<span class="cb2"></span>
</div>
<div class="row" style="top:462px;background:#f8f8f8">
<svg class="pi" width="9" height="7" viewBox="0 0 9 7"><path d="M1.4 1.35 L7.2 1.35 M1.4 1.35 L4.3 5.5" stroke="#4d48a4" stroke-width="0.7" fill="none"/><circle cx="1.4" cy="1.35" r="1.3" fill="#4d48a4"/><circle cx="7.2" cy="1.35" r="1.3" fill="#4d48a4"/><circle cx="4.3" cy="5.5" r="1.3" fill="#4d48a4"/></svg>
<span class="c ref" style="left:14.9px">PJ1911-0017</span>
<span class="c lib" style="left:77px">test 1 @akku</span>
<svg class="bi" width="6.2" height="8" viewBox="0 0 6.2 8"><rect x="0" y="0" width="6.2" height="8" fill="#6a62b4"/><rect x="1.1" y="1" width="1.2" height="4.6" fill="#fff" opacity=".45"/><rect x="3.9" y="1" width="1.2" height="4.6" fill="#fff" opacity=".45"/><rect x="2.4" y="6" width="1.4" height="2" fill="#fff" opacity=".5"/></svg>
<span class="c tiers" style="left:167px">AXA Assur...</span>
<span class="c dt ctr" style="left:284.6px;width:48px">14/11/2019</span>
<span class="c vis" style="left:416px">Contacts projet</span>
<span class="c amt rgt" style="right:310px">650 000,00</span>
<span class="cb1" style="left:613px"></span>
<span class="c dt ctr" style="left:646px;width:60px">14/11/2019 17:34</span>
<span class="c dt ctr" style="left:712px;width:60px">10/03/2020 19:41</span>
<span class="badge brl"><span>Brouillon</span></span>
<span class="cb2"></span>
</div>
<div class="row" style="top:481px;background:#ffffff">
<svg class="pi" width="9" height="7" viewBox="0 0 9 7"><path d="M1.4 1.35 L7.2 1.35 M1.4 1.35 L4.3 5.5" stroke="#4d48a4" stroke-width="0.7" fill="none"/><circle cx="1.4" cy="1.35" r="1.3" fill="#4d48a4"/><circle cx="7.2" cy="1.35" r="1.3" fill="#4d48a4"/><circle cx="4.3" cy="5.5" r="1.3" fill="#4d48a4"/></svg>
<span class="c ref" style="left:14.9px">PJ1911-0018</span>
<span class="c lib" style="left:77px">test 2 @ akku</span>
<svg class="bi" width="6.2" height="8" viewBox="0 0 6.2 8"><rect x="0" y="0" width="6.2" height="8" fill="#6a62b4"/><rect x="1.1" y="1" width="1.2" height="4.6" fill="#fff" opacity=".45"/><rect x="3.9" y="1" width="1.2" height="4.6" fill="#fff" opacity=".45"/><rect x="2.4" y="6" width="1.4" height="2" fill="#fff" opacity=".5"/></svg>
<span class="c tiers" style="left:167px">Garderie C...</span>
<span class="c dt ctr" style="left:284.6px;width:48px">14/11/2019</span>
<span class="c vis" style="left:416px">Contacts projet</span>
<span class="cb1" style="left:613px"></span>
<span class="c dt ctr" style="left:646px;width:60px">14/11/2019 17:34</span>
<span class="c dt ctr" style="left:712px;width:60px">10/03/2020 19:41</span>
<span class="badge brl"><span>Brouillon</span></span>
<span class="cb2"></span>
</div>
<div class="row" style="top:500px;background:#f8f8f8">
<svg class="pi" width="9" height="7" viewBox="0 0 9 7"><path d="M1.4 1.35 L7.2 1.35 M1.4 1.35 L4.3 5.5" stroke="#4d48a4" stroke-width="0.7" fill="none"/><circle cx="1.4" cy="1.35" r="1.3" fill="#4d48a4"/><circle cx="7.2" cy="1.35" r="1.3" fill="#4d48a4"/><circle cx="4.3" cy="5.5" r="1.3" fill="#4d48a4"/></svg>
<span class="c ref" style="left:14.9px">PJ1911-0019</span>
<span class="c lib" style="left:77px">test 3@ akku</span>
<svg class="bi" width="6.2" height="8" viewBox="0 0 6.2 8"><rect x="0" y="0" width="6.2" height="8" fill="#6a62b4"/><rect x="1.1" y="1" width="1.2" height="4.6" fill="#fff" opacity=".45"/><rect x="3.9" y="1" width="1.2" height="4.6" fill="#fff" opacity=".45"/><rect x="2.4" y="6" width="1.4" height="2" fill="#fff" opacity=".5"/></svg>
<span class="c tiers" style="left:167px">Garderie C...</span>
<span class="c dt ctr" style="left:284.6px;width:48px">14/11/2019</span>
<span class="c vis" style="left:416px">Contacts projet</span>
<span class="cb1" style="left:613px"></span>
<span class="c dt ctr" style="left:646px;width:60px">14/11/2019 17:35</span>
<span class="c dt ctr" style="left:712px;width:60px">10/03/2020 19:41</span>
<span class="badge brl"><span>Brouillon</span></span>
<span class="cb2"></span>
</div>
<div class="row" style="top:519px;background:#ffffff">
<svg class="pi" width="9" height="7" viewBox="0 0 9 7"><path d="M1.4 1.35 L7.2 1.35 M1.4 1.35 L4.3 5.5" stroke="#4d48a4" stroke-width="0.7" fill="none"/><circle cx="1.4" cy="1.35" r="1.3" fill="#4d48a4"/><circle cx="7.2" cy="1.35" r="1.3" fill="#4d48a4"/><circle cx="4.3" cy="5.5" r="1.3" fill="#4d48a4"/></svg>
<span class="c ref" style="left:14.9px">PJ1911-0020</span>
<span class="c lib" style="left:77px">test 4 @a akku</span>
<svg class="bi" width="6.2" height="8" viewBox="0 0 6.2 8"><rect x="0" y="0" width="6.2" height="8" fill="#6a62b4"/><rect x="1.1" y="1" width="1.2" height="4.6" fill="#fff" opacity=".45"/><rect x="3.9" y="1" width="1.2" height="4.6" fill="#fff" opacity=".45"/><rect x="2.4" y="6" width="1.4" height="2" fill="#fff" opacity=".5"/></svg>
<span class="c tiers" style="left:167px">Autre Tiers</span>
<span class="c dt ctr" style="left:284.6px;width:48px">14/11/2019</span>
<span class="c vis" style="left:416px">Contacts projet</span>
<span class="cb1" style="left:613px"></span>
<span class="c dt ctr" style="left:646px;width:60px">14/11/2019 17:35</span>
<span class="c dt ctr" style="left:712px;width:60px">10/03/2020 19:41</span>
<span class="badge brl"><span>Brouillon</span></span>
<span class="cb2"></span>
</div>

<div id="footer">www.nextgestion.com</div>
</body></html>
